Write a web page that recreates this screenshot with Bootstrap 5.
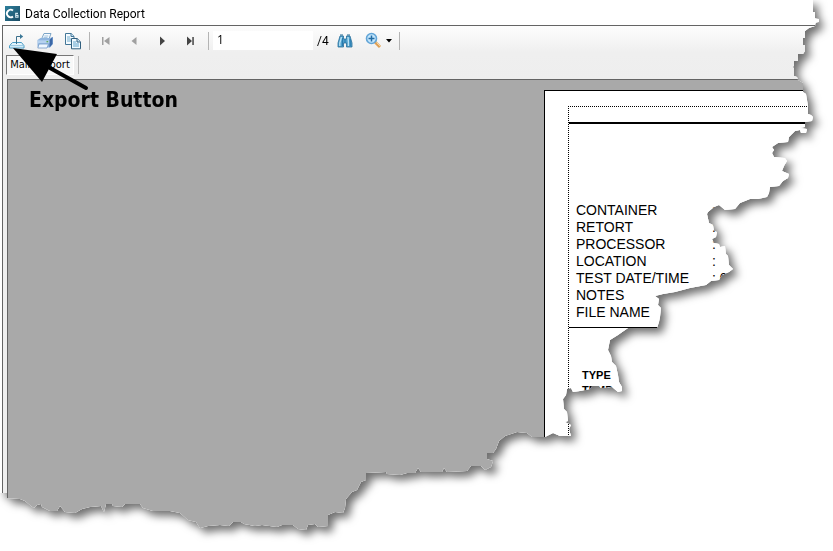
<!DOCTYPE html>
<html lang="en">
<head>
<meta charset="utf-8">
<meta name="viewport" content="width=device-width, initial-scale=1">
<title>Data Collection Report</title>
<link href="https://cdn.jsdelivr.net/npm/bootstrap@5.3.0/dist/css/bootstrap.min.css" rel="stylesheet">
<style>
body { background: #fff; color: #000; font-family: Roboto, "Open Sans", sans-serif; font-size: 12px; line-height: 16px; }
.torn-shadow { filter: drop-shadow(5px 5px 4px #707070); }
/* torn paper outline of the window */
.torn {
  background: #fff;
  clip-path: polygon(0 0, 813px 0, 813px 12px, 815px 12px, 815px 18px, 819px 19px, 819px 22px, 816px 23px, 815px 26px, 809px 28px, 805px 31px, 805px 38px, 803px 38px, 803px 45px, 805px 45px, 805px 51px, 803px 54px, 798px 54px, 798px 61px, 794px 61px, 794px 66px, 792px 67px, 794px 68px, 794px 76px, 797px 77px, 798px 80px, 803px 83px, 803px 92px, 806px 94px, 808px 106px, 808px 114px, 811px 115px, 813px 117px, 812px 121px, 805px 122px, 805px 127px, 800px 128px, 807px 129px, 806px 133px, 801px 133px, 800px 130px, 795px 131px, 792px 134px, 789px 137px, 788px 142px, 778px 143px, 772px 147px, 774px 150px, 772px 153px, 774px 157px, 785px 158px, 787px 161px, 784px 166px, 782px 171px, 789px 174px, 788px 178px, 783px 181px, 779px 186px, 770px 187px, 769px 193px, 767px 197px, 758px 199px, 750px 199px, 740px 203px, 735px 209px, 725px 210px, 719px 205px, 714px 207px, 708px 212px, 707px 214px, 709px 223px, 713px 225px, 714px 231px, 717px 232px, 716px 237px, 712px 239px, 714px 243px, 719px 244px, 720px 247px, 725px 246px, 726px 254px, 728px 256px, 729px 265px, 733px 269px, 729px 272px, 722px 275px, 719px 280px, 711px 281px, 706px 285px, 690px 288px, 675px 292px, 663px 294px, 655px 296px, 659px 299px, 658px 305px, 661px 308px, 660px 317px, 659px 322px, 657px 328px, 628px 328px, 618px 335px, 610px 340px, 608px 350px, 611px 356px, 612px 362px, 616px 366px, 618px 375px, 619px 382px, 622px 387px, 622px 391px, 618px 392px, 612px 387px, 601px 388px, 599px 386px, 592px 386px, 590px 389px, 580px 391px, 573px 392px, 571px 388px, 567px 389px, 566px 395px, 563px 399px, 564px 409px, 567px 412px, 568px 421px, 565px 422px, 571px 425px, 569px 429px, 571px 436px, 560px 436px, 553px 433px, 545px 437px, 532px 437px, 527px 433px, 517px 432px, 505px 436px, 499px 441px, 496px 449px, 493px 453px, 487px 453px, 487px 459px, 493px 461px, 491px 467px, 485px 470px, 481px 466px, 471px 466px, 467px 471px, 447px 472px, 444px 468px, 442px 472px, 421px 472px, 418px 468px, 415px 473px, 407px 473px, 400px 475px, 387px 474px, 386px 472px, 366px 473px, 366px 480px, 361px 482px, 357px 490px, 352px 492px, 346px 499px, 345px 508px, 343px 513px, 335px 512px, 328px 515px, 328px 526px, 318px 527px, 315px 524px, 308px 525px, 306px 530px, 298px 529px, 293px 525px, 282px 525px, 277px 527px, 262px 525px, 255px 526px, 244px 524px, 241px 522px, 233px 522px, 229px 526px, 220px 525px, 208px 526px, 200px 528px, 196px 522px, 188px 520px, 180px 513px, 170px 511px, 153px 511px, 143px 508px, 140px 504px, 125px 504px, 122px 507px, 113px 506px, 112px 504px, 106px 504px, 104px 512px, 101px 506px, 90px 507px, 82px 509px, 75px 513px, 65px 512px, 60px 506px, 57px 511px, 50px 511px, 42px 507px, 41px 504px, 37px 505px, 34px 508px, 31px 506px, 25px 501px, 20px 499px, 7px 498px, 7px 493px, 0 493px);
}
.title-strip { height: 25px; padding-left: 5px; gap: 4px; padding-top: 2px; }
.viewer-frame { margin-left: 2px; border-left: 1px solid #646464; border-top: 1px solid #646464; background: #efefef; }
.tool-area { background: linear-gradient(#fdfdfd, #efefef 50%, #eee); height: 53px; }
.tool-row { height: 29px; }
.tool-btn { width: 28px; height: 26px; padding: 0; border: 0; border-radius: 0; line-height: 0; color: #444; }
.tool-btn:disabled { opacity: 1; color: #a0a0a0; border: 0; }
.tool-sep { width: 1px; height: 18px; margin: 0 2px; background: #b4b4b4; }
.page-box { width: 100px; height: 19px; margin: 0 4px 0 2px; padding: 0 0 2px 4px; border: 0; border-radius: 0; background: #fff; font-family: "Open Sans", sans-serif; font-size: 12px; line-height: 16px; color: #000; }
.page-total { width: 14px; font-size: 12px; }
.wide-btn { width: 38px; }
.tab-btn { width: 68px; height: 20px; margin-left: 3px; padding: 0; border: 1px solid #fff; border-top-color: #777; border-left-color: #777; border-radius: 0; background: #f8f8f8; color: #000; font-family: "DejaVu Sans Condensed", "DejaVu Sans", sans-serif; font-size: 11px; line-height: 18px; white-space: nowrap; }
.canvas-area { margin-left: 4px; border-left: 1px solid #646464; border-top: 1px solid #646464; background: #a9a9a9; padding: 10px 0 0 536px; }
.sheet { background: #fff; border-left: 1px solid #000; border-top: 1px solid #000; padding: 15px 0 0 23px; }
.sheet-inner { border-left: 1px dotted #000; border-top: 1px dotted #000; padding-top: 15px; }
.head-rule { border-top: 2px solid #000; padding-top: 78px; padding-bottom: 6px; border-bottom: 1px solid #000; }
.facts { font-family: "Liberation Sans", Arial, sans-serif; font-size: 14px; line-height: 17px; margin: 0 0 0 7px; }
.facts dt { width: 136px; font-weight: 400; }
.facts dd { margin: 0; }
.type-list { font-family: "Liberation Sans", Arial, sans-serif; font-size: 11px; line-height: 15px; padding: 40px 0 0 13px; font-weight: 700; }
.callout-arrow { position: absolute; left: 0; top: 40px; pointer-events: none; }
.callout-text { position: absolute; left: 29px; top: 88px; font-family: "DejaVu Sans Condensed", "DejaVu Sans", sans-serif; font-weight: 700; font-size: 21px; line-height: 24px; white-space: nowrap; }
</style>
<script src="https://cdn.jsdelivr.net/npm/bootstrap@5.3.0/dist/js/bootstrap.bundle.min.js"></script>
</head>
<body class="overflow-hidden">
<div class="position-relative">
<div class="torn-shadow">
<main class="torn d-flex flex-column vh-100">
  <header class="title-strip d-flex align-items-center">
    <svg width="16" height="16" viewBox="0 0 16 16" aria-hidden="true">
      <defs><linearGradient id="logo" x2="1" y2="1"><stop stop-color="#2d7f9c"/><stop offset="1" stop-color="#1b4b63"/></linearGradient></defs>
      <rect width="15" height="15" fill="url(#logo)"/>
      <path d="M8 4.6A3.7 3.7 0 1 0 8 10.4" fill="none" stroke="#fff" stroke-width="1.9"/>
      <path d="M13 7.4H10.7V11.3H13V9.4H11" fill="none" stroke="#d4e8ef" stroke-width="1.1"/>
    </svg>
    <span>Data Collection Report</span>
  </header>
  <div class="viewer-frame flex-grow-1 d-flex flex-column">
    <div class="tool-area">
      <div class="tool-row d-flex align-items-center" role="toolbar" aria-label="Report">
        <button class="btn tool-btn" type="button" aria-label="Export">
          <svg width="18" height="18" viewBox="0 0 18 18" fill="none"><path d="M4.5 10.5h9l2.5 3.2v2.3H1.5v-2.3z" fill="#e2f3fc" stroke="#4a9bc4"/><path d="M1.5 13.7H16" stroke="#8cc3df"/><path d="M8.5 12V4.5H13" stroke="#3a6f8c"/><path d="M12 2l3.2 2.5L12 7z" fill="#3a7796"/></svg>
        </button>
        <button class="btn tool-btn" type="button" aria-label="Print">
          <svg width="18" height="18" viewBox="0 0 18 18"><path d="M5.5 7L8 1.5h7L13 7z" fill="#f4faff" stroke="#7ca5c7"/><path d="M8.3 4h4M7.5 5.6h4" stroke="#8db4d4" stroke-width=".8"/><path d="M1.5 8l3-2h9l3.5-1v7l-3 3.5H2.5l-1-1z" fill="#8fb5df"/><path d="M13.5 8L16.5 5v7l-3 3.5z" fill="#3b67a6"/><path d="M2 8.3h11.3v3H2z" fill="#b5d1ef"/><path d="M3 12h9.5l-1.5 4H1.8z" fill="#eef7ff" stroke="#7399c7" stroke-width=".8"/><path d="M10.5 9.7h1.7" stroke="#54a643" stroke-width="1.2"/></svg>
        </button>
        <button class="btn tool-btn" type="button" aria-label="Copy">
          <svg width="18" height="18" viewBox="0 0 18 18"><path d="M1.5 1.5h5.7L10 4.3v8.2H1.5z" fill="#f5fbff" stroke="#427697"/><path d="M7 1.5v3h3" fill="#c8e2f4" stroke="#427697"/><path d="M3 5h3M3 7h4M3 9h4" stroke="#74aecd"/><path d="M7.5 6.5h5.7L16.5 9.8v7H7.5z" fill="#eff9ff" stroke="#315f7e"/><path d="M13 6.5V10h3.5" fill="#c8e2f4" stroke="#315f7e"/><path d="M9 10h3M9 12h6M9 14h6" stroke="#60a3cb"/></svg>
        </button>
        <span class="tool-sep"></span>
        <button class="btn tool-btn" type="button" aria-label="First page" disabled><svg width="10" height="10" viewBox="0 0 10 10" fill="currentColor"><path d="M1 1h1.5v8H1zM8.5 1v8L3 5z"/></svg></button>
        <button class="btn tool-btn" type="button" aria-label="Previous page" disabled><svg width="10" height="10" viewBox="0 0 10 10" fill="currentColor"><path d="M7.5 1v8L2.5 5z"/></svg></button>
        <button class="btn tool-btn" type="button" aria-label="Next page"><svg width="10" height="10" viewBox="0 0 10 10" fill="currentColor"><path d="M3 .5v9L8 5z"/></svg></button>
        <button class="btn tool-btn" type="button" aria-label="Last page"><svg width="10" height="10" viewBox="0 0 10 10" fill="currentColor"><path d="M2 .5v9L7 5zM7.3 1h1.5v8H7.3z"/></svg></button>
        <span class="tool-sep ms-1"></span>
        <input class="page-box" id="page" type="text" value="1" aria-label="Page number">
        <label class="page-total" for="page">/4</label>
        <button class="btn tool-btn" type="button" aria-label="Find">
          <svg width="16" height="16" viewBox="0 0 16 16"><path d="M3 3h3.5v3h3V3H13l2 7v4H9.5v-4h-3v4H1v-4z" fill="#4e9fcb" stroke="#286f9b" stroke-width=".8"/><path d="M3 2h3M10 2h3" stroke="#246a94"/><path d="M4.5 4L2.8 10v3M11 4l.5 6v3" fill="none" stroke="#b9e2f5" stroke-width="1.4"/><path d="M5.5 5v8M13.2 6v7M8 6v4" stroke="#277aaf"/></svg>
        </button>
        <button class="btn tool-btn wide-btn d-flex align-items-center justify-content-center gap-1" type="button" aria-label="Zoom">
          <svg width="17" height="17" viewBox="0 0 17 17" fill="none"><path d="M10 10l5 5" stroke="#e0a055" stroke-width="3"/><path d="M11.5 10.5l4 4" stroke="#f6d6a2"/><circle cx="6.5" cy="6.5" r="5" fill="#c4e6fc" stroke="#62a5d7" stroke-width="1.6"/><path d="M6.5 3.5v6M3.5 6.5h6" stroke="#246da5" stroke-width="1.5"/></svg>
          <svg width="6" height="4" viewBox="0 0 6 4"><path d="M0 0h6L3 3.5z" fill="#000"/></svg>
        </button>
        <span class="tool-sep"></span>
      </div>
      <div class="d-flex align-items-center">
        <button class="btn tab-btn" type="button">Main Report</button>
        <span class="tool-sep ms-1"></span>
      </div>
    </div>
    <section class="canvas-area flex-grow-1 d-flex" aria-label="Report page">
      <article class="sheet flex-grow-1 d-flex">
        <div class="sheet-inner flex-grow-1">
          <div class="head-rule">
            <dl class="facts">
              <div class="d-flex"><dt>CONTAINER</dt><dd>:</dd></div>
              <div class="d-flex"><dt>RETORT</dt><dd>:</dd></div>
              <div class="d-flex"><dt>PROCESSOR</dt><dd>:</dd></div>
              <div class="d-flex"><dt>LOCATION</dt><dd>:</dd></div>
              <div class="d-flex"><dt>TEST DATE/TIME</dt><dd>: 0</dd></div>
              <div class="d-flex"><dt>NOTES</dt><dd>:</dd></div>
              <div class="d-flex"><dt>FILE NAME</dt><dd>:</dd></div>
            </dl>
          </div>
          <div class="type-list"><div>TYPE</div><div>TEMP</div></div>
        </div>
      </article>
    </section>
  </div>
</main>
</div>
<svg class="callout-arrow" width="92" height="54" viewBox="0 40 92 54" aria-hidden="true"><path d="M50 68L86 88" stroke="#000" stroke-width="4" stroke-linecap="round"/><path d="M13 48L57 54 42 82z"/></svg>
<div class="callout-text">Export Button</div>
</div>
</body>
</html>
